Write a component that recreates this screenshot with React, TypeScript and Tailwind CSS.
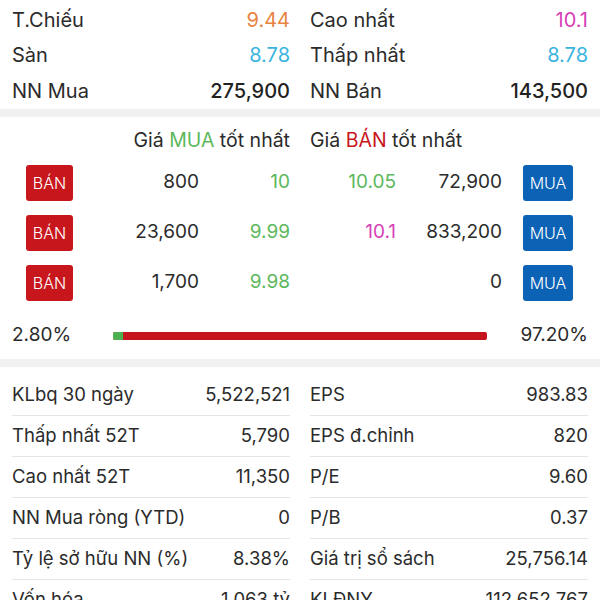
import React from "react";

const font = { fontFamily: "Inter, 'Noto Sans', sans-serif" };

function Pair({ label, value, vClass }: { label: string; value: string; vClass: string }) {
  return (
    <div className="flex h-[35.5px] items-center justify-between">
      <span className="text-[#2b2b2b]">{label}</span>
      <span className={vClass}>{value}</span>
    </div>
  );
}

function Sell() {
  return (
    <div className="flex h-[36px] w-[47px] items-center justify-center rounded-[3px] bg-[#c8161d] text-[16px] font-light text-white">
      BÁN
    </div>
  );
}
function Buy() {
  return (
    <div className="flex h-[36px] w-[50px] items-center justify-center rounded-[3px] bg-[#0c63b6] text-[16px] font-light text-white">
      MUA
    </div>
  );
}

const orders = [
  { bv: "800", bp: "10", bpc: "text-[#5cb85c]", sp: "10.05", spc: "text-[#5cb85c]", sv: "72,900" },
  { bv: "23,600", bp: "9.99", bpc: "text-[#5cb85c]", sp: "10.1", spc: "text-[#d63fb6]", sv: "833,200" },
  { bv: "1,700", bp: "9.98", bpc: "text-[#5cb85c]", sp: "", spc: "", sv: "0" },
];

const stats: [string, string, string, string][] = [
  ["KLbq 30 ngày", "5,522,521", "EPS", "983.83"],
  ["Thấp nhất 52T", "5,790", "EPS đ.chỉnh", "820"],
  ["Cao nhất 52T", "11,350", "P/E", "9.60"],
  ["NN Mua ròng (YTD)", "0", "P/B", "0.37"],
  ["Tỷ lệ sở hữu NN (%)", "8.38%", "Giá trị sổ sách", "25,756.14"],
  ["Vốn hóa", "1,063 tỷ", "KLĐNY", "112,652,767"],
];

export default function App() {
  const buyPct = 2.8;
  return (
    <div style={font} className="h-[600px] w-[600px] overflow-hidden bg-white text-[19px] text-[#2b2b2b]">
      {/* Section 1 */}
      <div className="grid grid-cols-2 gap-x-5 px-3 pt-[2px] text-[20px]">
        <div>
          <Pair label="T.Chiếu" value="9.44" vClass="text-[#e8833f]" />
          <Pair label="Sàn" value="8.78" vClass="text-[#3ab4df]" />
          <Pair label="NN Mua" value="275,900" vClass="font-medium text-[#222]" />
        </div>
        <div>
          <Pair label="Cao nhất" value="10.1" vClass="text-[#d63fb6]" />
          <Pair label="Thấp nhất" value="8.78" vClass="text-[#3ab4df]" />
          <Pair label="NN Bán" value="143,500" vClass="font-medium text-[#222]" />
        </div>
      </div>
      <div className="h-2 bg-[#f1f1f1]" />

      {/* Section 2 */}
      <div className="px-3">
        <div className="grid h-[41px] grid-cols-2 gap-x-5 pt-[9px] text-[19.5px] leading-[28px]">
          <div className="text-right">
            Giá <span className="text-[#5cb85c]">MUA</span> tốt nhất
          </div>
          <div>
            Giá <span className="text-[#c8161d]">BÁN</span> tốt nhất
          </div>
        </div>
        {orders.map((o, i) => (
          <div key={i} className="grid h-[50px] grid-cols-2 gap-x-5">
            <div className="flex items-center pl-[14px]">
              <Sell />
              <span className="w-[126px] text-right">{o.bv}</span>
              <span className={`flex-1 text-right ${o.bpc}`}>{o.bp}</span>
            </div>
            <div className="flex items-center pr-[15px]">
              <span className={`w-[86px] text-right ${o.spc}`}>{o.sp}</span>
              <span className="w-[106px] text-right">{o.sv}</span>
              <span className="flex-1" />
              <Buy />
            </div>
          </div>
        ))}
        <div className="grid h-[51px] grid-cols-[101px_1fr_101px] items-center pt-[5px]">
          <span>2.80%</span>
          <div className="flex h-[8px] overflow-hidden rounded-[2px] bg-[#c4161c]">
            <div className="h-full bg-[#4caf50]" style={{ width: `${buyPct}%` }} />
          </div>
          <span className="text-right">97.20%</span>
        </div>
      </div>
      <div className="h-2 bg-[#f1f1f1]" />

      {/* Section 3 */}
      <div className="grid grid-cols-2 gap-x-5 px-3 pt-[8px] text-[18.5px]">
        {stats.map((r, i) => (
          <React.Fragment key={i}>
            <div className="flex h-[41px] items-center justify-between border-b border-[#e6e6e6]">
              <span>{r[0]}</span>
              <span>{r[1]}</span>
            </div>
            <div className="flex h-[41px] items-center justify-between border-b border-[#e6e6e6]">
              <span>{r[2]}</span>
              <span>{r[3]}</span>
            </div>
          </React.Fragment>
        ))}
      </div>
    </div>
  );
}
